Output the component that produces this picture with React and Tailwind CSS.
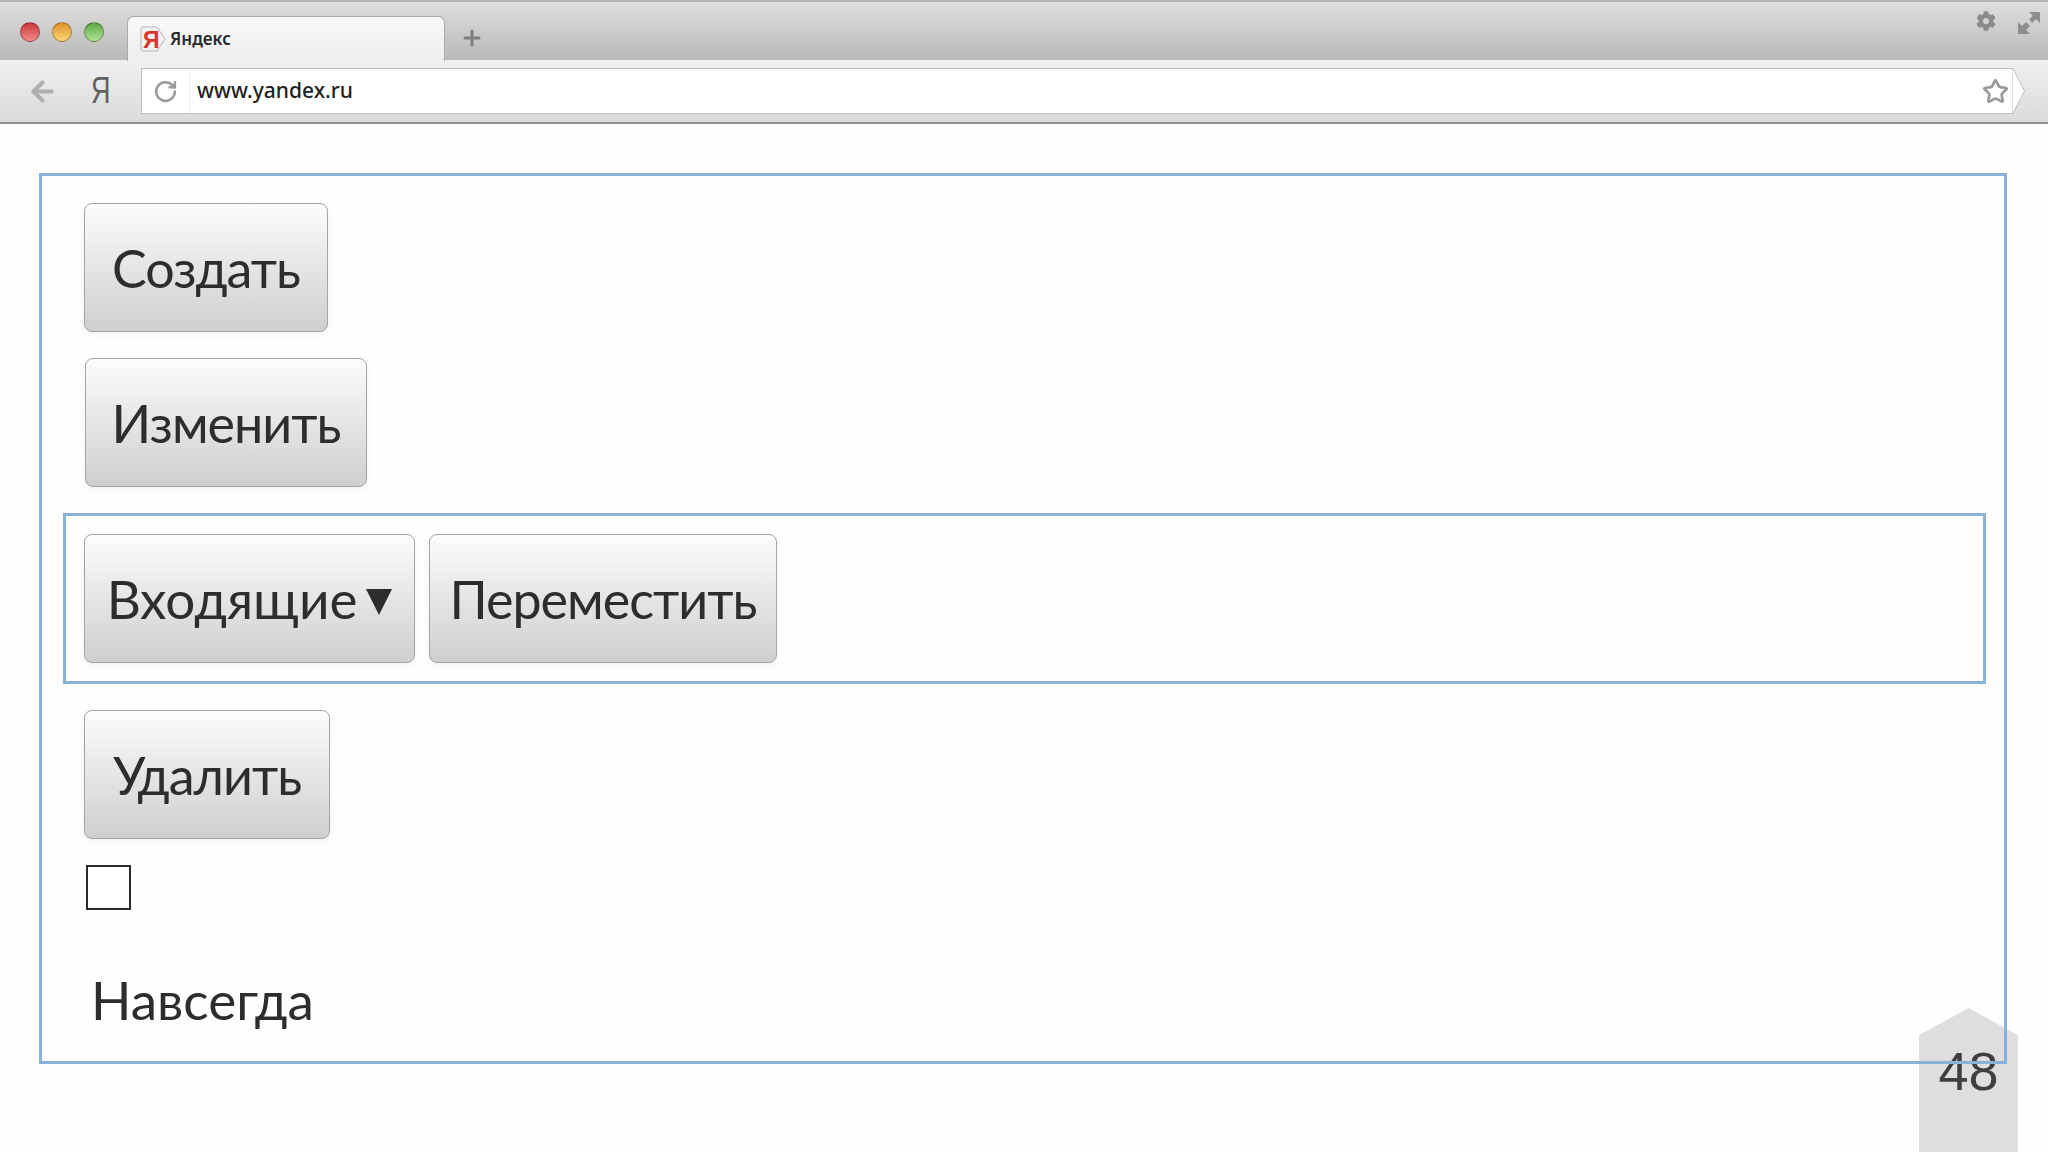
import { ArrowLeft, Plus, RotateCw, Star } from 'lucide-react';
import { FaCog } from 'react-icons/fa';

function Button({ className, children }) {
  return (
    <button className={`${className} flex h-[129px] items-center justify-center rounded-[8px] border border-[#a5a5a7] bg-gradient-to-b from-[#fcfcfd] to-[#cfcfd1] font-['Lato',sans-serif] leading-none text-[#2d2d2f] shadow-[0_2px_6px_rgba(0,0,0,0.06)]`}>
      {children}
    </button>
  );
}

function TrafficLight({ color }) {
  return <span className={`h-[20px] w-[20px] rounded-full border border-black/30 ${color}`} />;
}

function BrowserChrome() {
  return (
    <header className="flex flex-col">
      <div className="flex h-[60px] items-end justify-between border-t-2 border-[#b5b5b5] bg-gradient-to-b from-[#dedede] to-[#b9b9b9] pl-[20px]">
        <div className="flex items-end">
          <div className="mb-[18px] flex gap-[12px]">
            <TrafficLight color="bg-gradient-to-b from-[#c9353b] to-[#f58a8a]" />
            <TrafficLight color="bg-gradient-to-b from-[#dc9423] to-[#fbd475]" />
            <TrafficLight color="bg-gradient-to-b from-[#58a544] to-[#b4e695]" />
          </div>
          <div className="relative z-10 ml-[23px] mb-[-1px] flex h-[45px] w-[318px] items-center gap-[4px] rounded-t-[7px] border border-b-0 border-[#a9a9a9] bg-gradient-to-b from-[#f9f9fa] to-[#eeeeef] pl-[12px]">
            <svg width="26" height="26" viewBox="0 0 26 26" className="shrink-0">
              <path d="M3 1h14l8 12-8 12H3a2 2 0 0 1-2-2V3a2 2 0 0 1 2-2z" fill="#f2f2f2" stroke="#b4b4b4" />
              <text x="3" y="22" fontSize="23" fontWeight="700" fill="#d8362c" fontFamily="Liberation Sans, sans-serif">Я</text>
            </svg>
            <span className="font-['Noto_Sans',sans-serif] text-[17px] font-semibold text-[#2b2b2b]">Яндекс</span>
          </div>
          <Plus className="mb-[10px] ml-[15px]" size={24} strokeWidth={3} color="#7e7e7e" />
        </div>
        <div className="mb-[25px] mr-[7px] flex items-start gap-[21px]">
          <FaCog size={20} color="#8b8b8b" />
          <svg width="24" height="24" viewBox="0 0 24 24" fill="#8d8d8d">
            <path d="M1 23V11l4 4 4-4 4 4-4 4 4 4zM23 1v11l-4-4-4 4-3-4 4-3-4-4z" />
          </svg>
        </div>
      </div>
      <div className="flex h-[64px] items-center border-b-2 border-[#8e8e8e] bg-gradient-to-b from-[#f0f0f0] to-[#dbdbdb] pl-[27px]">
        <ArrowLeft size={31} strokeWidth={3.2} color="#b0b0b0" />
        <span className="ml-[33px] w-[26px] origin-left scale-x-75 font-['Liberation_Sans',sans-serif] text-[36px] font-normal leading-none text-[#5f5f5f]">Я</span>
        <div className="ml-[24px] flex h-[46px] flex-1 items-stretch">
          <div className="flex flex-1 items-center border-y border-l border-[#bdbdbd] bg-white">
            <div className="flex h-full w-[48px] items-center justify-center border-r border-[#efefef]">
              <RotateCw size={25} strokeWidth={2.4} color="#9a9a9a" />
            </div>
            <span className="ml-[7px] flex-1 font-['Noto_Sans',sans-serif] text-[21px] font-medium text-[#1f1f1f]">www.yandex.ru</span>
            <Star className="mr-[3px]" size={27} strokeWidth={2.4} color="#9a9a9a" />
          </div>
          <svg width="13" height="46" viewBox="0 0 13 46" className="shrink-0">
            <path d="M0 .5h1L12.5 23 1 45.5H0z" fill="#fff" stroke="#bdbdbd" />
          </svg>
          <div className="w-[23px]" />
        </div>
      </div>
    </header>
  );
}

export default function App() {
  return (
    <div className="relative h-[1152px] w-[2048px] overflow-hidden bg-[#fefefe]">
      <BrowserChrome />

      {/* номер слайда */}
      <div className="absolute left-[1919px] top-[1008px] flex h-[144px] w-[99px] items-end justify-center bg-[#dfdedd] pb-[54px] [clip-path:polygon(50%_0,100%_19%,100%_100%,0_100%,0_19%)]">
        <span className="font-['Liberation_Sans',sans-serif] text-[54px] leading-none text-[#3f3f3f]">48</span>
      </div>

      <main className="relative ml-[39px] mt-[49px] h-[891px] w-[1968px] border-[3px] border-[#8ab2d9] pl-[42px] pt-[27px]">
        <div className="flex flex-col gap-[26px]">
          <Button className="w-[244px] text-[52px] tracking-[-1px]">Создать</Button>
          <div className="ml-[1px]">
            <Button className="w-[282px] text-[52px] tracking-[-1px]">Изменить</Button>
          </div>
        </div>
        <div className="-ml-[21px] mt-[26px] flex w-[1923px] gap-[14px] border-[3px] border-[#8ab2d9] py-[18px] pl-[18px]">
          <Button className="w-[331px] text-[53px]">
            Входящие
            <svg width="26" height="26" viewBox="0 0 26 26" className="ml-[9px] mt-[6px]">
              <path d="M0 0h26L13 26z" fill="#2d2d2f" />
            </svg>
          </Button>
          <Button className="w-[348px] text-[52px] tracking-[-1px]">Переместить</Button>
        </div>
        <div className="mt-[26px]">
          <Button className="w-[246px] text-[52px] tracking-[-1px]">Удалить</Button>
        </div>
        <div className="ml-[2px] mt-[26px] h-[45px] w-[45px] border-2 border-[#2a2a2a] bg-white" />
        <p className="ml-[7px] mt-[54px] font-['Lato',sans-serif] text-[53px] leading-[72px] text-[#2d2d2f]">Навсегда</p>
      </main>
    </div>
  );
}
